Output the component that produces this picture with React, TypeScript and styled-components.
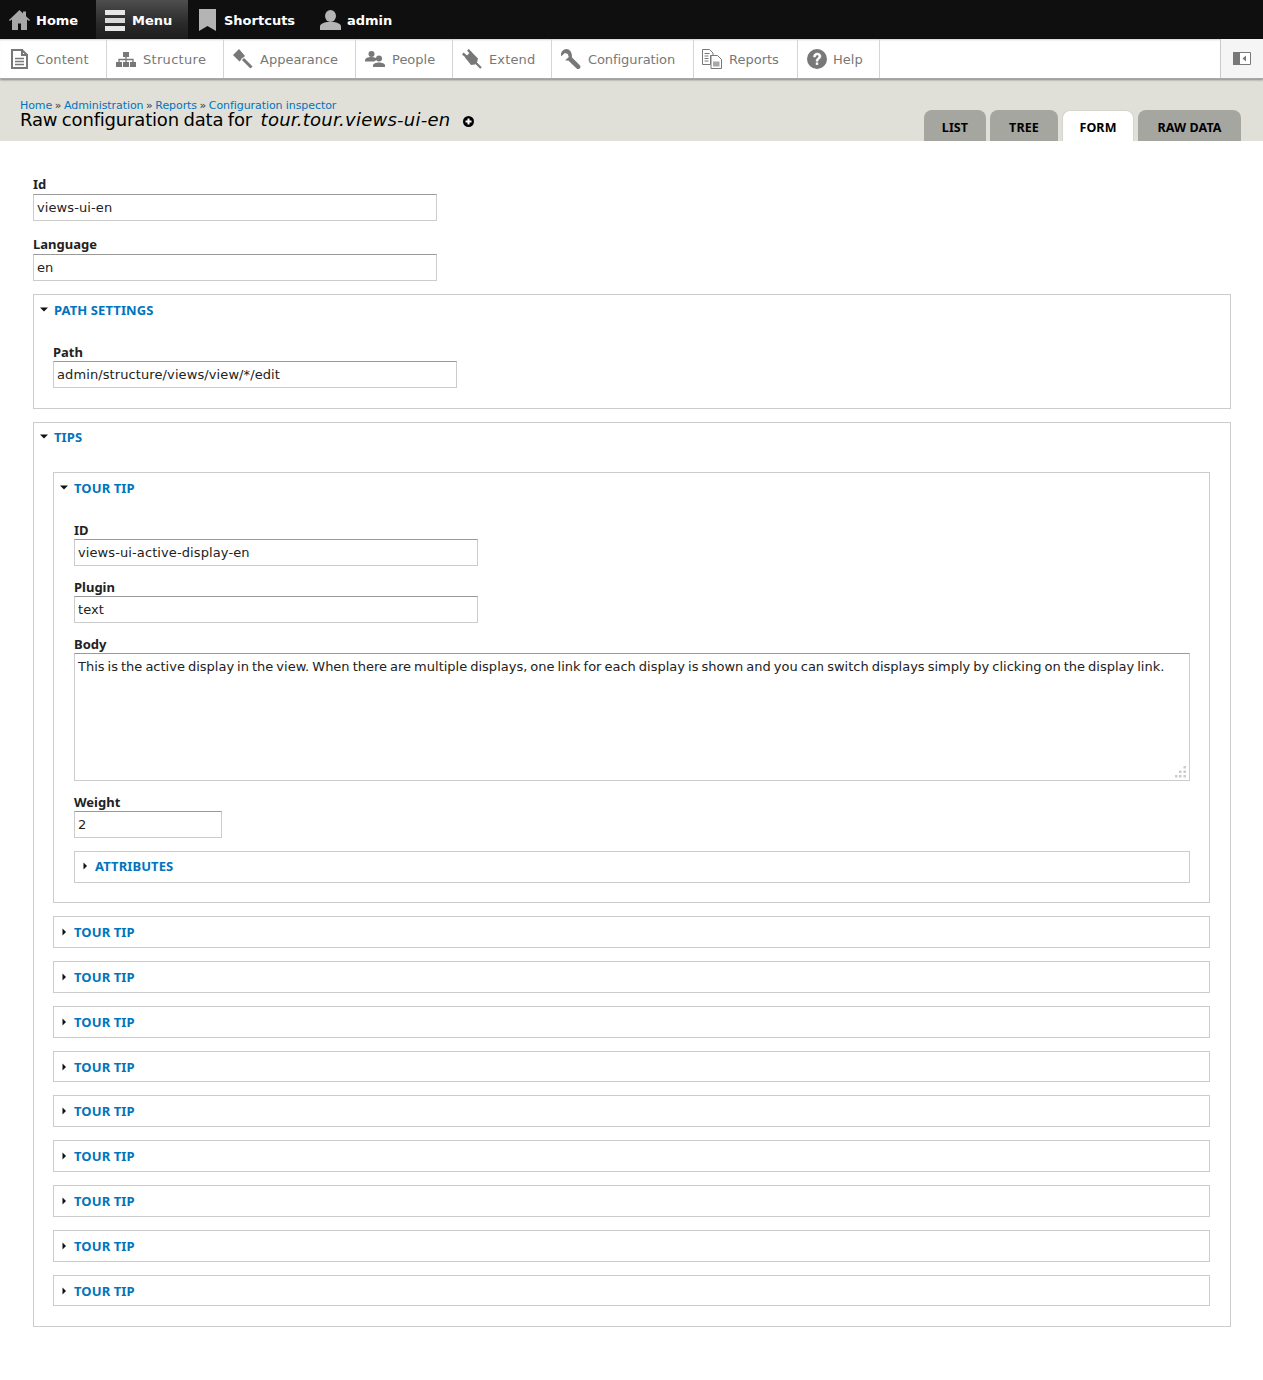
import React from "react";
import styled, { createGlobalStyle } from "styled-components";

const BODY_FONT = `"DejaVu Sans", Verdana, sans-serif`;
const LABEL_FONT = `"Noto Sans", "Open Sans", sans-serif`;

const Global = createGlobalStyle`
  html, body { margin: 0; padding: 0; background: #fff; }
  body { font-family: ${BODY_FONT}; font-size: 13px; color: #222; }
  * { box-sizing: border-box; }
`;

const Page = styled.div`
  width: 1263px;
  min-height: 1380px;
  background: #fff;
`;

const TopBar = styled.div`
  display: flex;
  height: 39px;
  background: #0f0f0f;
`;

const TopItem = styled.a<{ $active?: boolean; $width: number; $gap: number; $pad: number }>`
  display: flex;
  align-items: center;
  width: ${(p) => p.$width}px;
  height: 39px;
  padding: 1px 0 0 ${(p) => p.$pad}px;
  gap: ${(p) => p.$gap}px;
  color: #fff;
  font-weight: 700;
  font-size: 13px;
  background: ${(p) => (p.$active ? "linear-gradient(#4e4e4e, #2a2a2a 60%, #1d1d1d)" : "transparent")};
`;

const Tray = styled.div`
  position: relative;
  z-index: 1;
  display: flex;
  height: 40px;
  background: #fff;
  border-bottom: 1px solid #a8a8a8;
  box-shadow: 0 1px 2px rgba(0, 0, 0, 0.4), inset 0 2px 2px -1px rgba(0, 0, 0, 0.18);
`;

const TrayItem = styled.a<{ $width: number; $gap: number; $pad: number; $track?: number }>`
  display: flex;
  align-items: center;
  width: ${(p) => p.$width}px;
  height: 39px;
  padding: 1px 0 0 ${(p) => p.$pad}px;
  gap: ${(p) => p.$gap}px;
  border-right: 1px solid #d5d5d5;
  color: #787878;
  font-size: 13px;
  letter-spacing: ${(p) => p.$track ?? 0}px;
`;

const TraySpacer = styled.div`
  flex: 1;
`;

const TrayToggle = styled.div`
  display: flex;
  align-items: center;
  justify-content: center;
  width: 43px;
  height: 39px;
  background: #f5f5f5;
  border-left: 1px solid #c9c9c9;
`;

const Header = styled.header`
  position: relative;
  height: 62px;
  background: #e0e0d8;
  padding: 20px 20px 0;
`;

const Crumbs = styled.div`
  font-size: 11px;
  line-height: 13px;
  color: #333;
  letter-spacing: -0.08px;
  word-spacing: -0.8px;
  white-space: nowrap;
`;

const Crumb = styled.a`
  color: #0074bd;
  word-spacing: 0;
`;

const Title = styled.h1`
  display: flex;
  align-items: center;
  margin: 0;
  height: 15px;
  font-size: 18px;
  font-weight: 400;
  line-height: 15px;
  letter-spacing: -0.18px;
  word-spacing: -1px;
  color: #000;
  white-space: pre;
  em {
    margin-left: 4px;
    font-style: italic;
    letter-spacing: 0.25px;
  }
`;

const PlusIcon = styled.svg`
  margin-left: 13px;
  margin-top: 3px;
`;

const Tabs = styled.nav`
  position: absolute;
  right: 22px;
  bottom: 0;
  display: flex;
  gap: 4px;
`;

const Tab = styled.a<{ $active?: boolean; $width: number }>`
  display: flex;
  align-items: center;
  justify-content: center;
  width: ${(p) => p.$width}px;
  height: 31px;
  border-radius: 8px 8px 0 0;
  background: ${(p) => (p.$active ? "#fff" : "#a6a6a0")};
  border: ${(p) => (p.$active ? "1px solid #d5d5cd" : "none")};
  border-bottom: none;
  color: #000;
  font-family: ${LABEL_FONT};
  font-size: 12.5px;
  font-weight: 700;
  letter-spacing: 0.1px;
  padding-top: ${(p) => (p.$active ? 2 : 4)}px;
`;

const Content = styled.main`
  padding: 36px 32px 0 33px;
`;

const Item = styled.div<{ $gap?: number }>`
  margin-bottom: ${(p) => p.$gap ?? 13}px;
`;

const Label = styled.label<{ $raised?: boolean }>`
  display: block;
  height: 17px;
  font-family: ${LABEL_FONT};
  font-size: 13px;
  font-weight: 700;
  line-height: ${(p) => (p.$raised ? 15 : 17)}px;
  color: #222;
`;

const TextInput = styled.input<{ $width: number }>`
  display: block;
  width: ${(p) => p.$width}px;
  height: 27px;
  padding: 0 3px;
  border: 1px solid #ccc;
  border-top-color: #999;
  border-radius: 0;
  outline: none;
  font-family: ${BODY_FONT};
  font-size: 13px;
  letter-spacing: 0.1px;
  color: #222;
`;

const AreaWrap = styled.div`
  position: relative;
  width: 1116px;
`;

const TextArea = styled.textarea`
  display: block;
  width: 100%;
  height: 128px;
  padding: 4px 3px;
  border: 1px solid #ccc;
  border-top-color: #999;
  border-radius: 0;
  outline: none;
  resize: none;
  font-family: ${BODY_FONT};
  font-size: 13px;
  line-height: 18px;
  word-spacing: -1.1px;
  color: #222;
`;

const Grip = styled.svg`
  position: absolute;
  right: 3px;
  bottom: 3px;
`;

const Fieldset = styled.section<{ $open?: boolean; $level: number; $last?: boolean; $bottom?: number }>`
  margin-bottom: ${(p) => (p.$last ? 0 : 13)}px;
  border: 1px solid #ccc;
  padding: 0 ${(p) => (p.$level === 0 ? 20 : 19)}px ${(p) => (p.$open ? (p.$bottom ?? 20) : 0)}px
    ${(p) => (p.$level === 0 ? 19 : 20)}px;
  height: ${(p) => (p.$open ? "auto" : "31.8px")};
`;

const Legend = styled.h3<{ $open?: boolean; $level: number; $lift?: boolean }>`
  position: relative;
  display: flex;
  align-items: center;
  height: 30px;
  margin: 0 0 ${(p) => (p.$open ? 19 : 0)}px ${(p) => (p.$level === 0 ? 1 : 0)}px;
  padding-bottom: ${(p) => (p.$lift ? 2 : 0)}px;
  color: #0074bd;
  font-family: ${LABEL_FONT};
  font-size: 13px;
  font-weight: 700;
  letter-spacing: 0.1px;
  text-transform: uppercase;
`;

const Caret = styled.svg<{ $lift?: boolean }>`
  position: absolute;
  left: -15px;
  top: ${(p) => (p.$lift ? 10 : 11)}px;
`;

const TOUR_COUNT = 9;

const SectionTitle = ({ open, level, lift, children }: { open?: boolean; level: number; lift?: boolean; children: React.ReactNode }) => (
  <Legend $open={open} $level={level} $lift={lift}>
    <Caret $lift={lift} width="10" height="8" viewBox="0 0 10 8">
      {open ? <path d="M1 1.500h8L5 5.500z" fill="#111" /> : <path d="M3.500 0.500v7L7 4z" fill="#111" />}
    </Caret>
    {children}
  </Legend>
);

const G = "#787878";

const HomeIcon = () => (
  <svg width="21" height="20" viewBox="0 0 21 20">
    <path d="M10.500 0 0 10l.8 1L3 9.500V20h6v-6.500h3V20h6V9.500l2.200 1.500.8-1-4-3.800V1.500h-3v2z" fill="#a8a8a8" />
  </svg>
);
const MenuIcon = () => (
  <svg width="20" height="21" viewBox="0 0 20 21">
    <path d="M0 0h20v5H0z" fill="#e6e6e6" />
    <path d="M0 8h20v5H0z" fill="#d8d8d8" />
    <path d="M0 16h20v5H0z" fill="#e6e6e6" />
  </svg>
);
const BookmarkIcon = () => (
  <svg width="17" height="22" viewBox="0 0 17 22">
    <path d="M0 0h17v22l-8.500-5L0 22z" fill="#b4b4b4" />
  </svg>
);
const UserIcon = () => (
  <svg width="21" height="20" viewBox="0 0 21 20">
    <ellipse cx="10.500" cy="6" rx="5.500" ry="6" fill="#b4b4b4" />
    <path d="M0 20v-3.500C0 14 4 12.500 7 12h7c3 .5 7 2 7 4.500V20z" fill="#b4b4b4" />
  </svg>
);
const ContentIcon = () => (
  <svg width="17" height="20" viewBox="0 0 17 20">
    <path d="M1 1h10l5 5v13H1z" fill="#fff" stroke={G} strokeWidth="2" />
    <path d="M10 0h2v5h5v2h-7z" fill={G} />
    <path d="M4 9.500h9M4 12.500h9M4 15.500h9" stroke={G} strokeWidth="1.500" />
  </svg>
);
const StructureIcon = () => (
  <svg width="20" height="15" viewBox="0 0 20 15">
    <path d="M7 0h6v5H7zM0 10h6v5H0zM7 10h6v5H7zM14 10h6v5h-6z" fill={G} />
    <path d="M10 5v5M3 10V7.500h14V10" stroke={G} strokeWidth="1.300" fill="none" />
  </svg>
);
const AppearanceIcon = () => (
  <svg width="20" height="20" viewBox="0 0 20 20">
    <path d="M6 0 0 6l6.500 6.500L8 11l.5-1.500 1.500-.8L12 7z" fill={G} />
    <path d="M10 10l8.500 8.500" stroke={G} strokeWidth="3" />
  </svg>
);
const PeopleIcon = () => (
  <svg width="20" height="16" viewBox="0 0 20 16">
    <circle cx="6.500" cy="3" r="3" fill={G} />
    <path d="M0 9.500C0 7 3 6 6.500 6s5 1 6 2.500L9 10.500H0z" fill={G} />
    <circle cx="14" cy="7.500" r="3" fill={G} />
    <path d="M8 16v-1.500c0-2 3-3 6-3s6 1 6 3V16z" fill={G} />
  </svg>
);
const ExtendIcon = () => (
  <svg width="20" height="20" viewBox="0 0 20 20">
    <path d="M.8 4.500 5.500 8.500M6 .7l4 4.800" stroke={G} strokeWidth="2.400" />
    <path d="M3 8.500 9 2.500l7 7-1 4-2 2-4 .5z" fill={G} />
    <path d="M14 14l5 5" stroke={G} strokeWidth="2.200" />
  </svg>
);
const ConfigIcon = () => (
  <svg width="20" height="20" viewBox="0 0 20 20">
    <path d="M5.500 0C2.500.1 0 2.500 0 5.500c0 .7.100 1.300.3 1.800l3.500-3.400 3 1L7.800 8 4.300 11.300c1 .4 2 .5 3 .3L15.600 19.400c1 .9 2.400.8 3.300-.1.800-.9.800-2.200-.1-3.100L10.800 8.300C11.600 4 8.800.2 5.500 0z" fill={G} />
  </svg>
);
const ReportsIcon = () => (
  <svg width="20" height="20" viewBox="0 0 20 20">
    <path d="M.5.500h7l3.500 3.500v2.500H8.500v9H.5z" fill="#fff" stroke={G} />
    <path d="M2.500 4.500h5M2.500 7h4M2.500 9.500h4M2.500 12h4" stroke={G} />
    <path d="M9 6.500h6.500l4 4v9H9z" fill="#fff" stroke={G} />
    <path d="M11 12.500h6.500v5H11z" fill="#a8a8a8" />
  </svg>
);
const HelpIcon = () => (
  <svg width="20" height="20" viewBox="0 0 20 20">
    <circle cx="10" cy="10" r="10" fill={G} />
    <path d="M6.500 8C6.500 5.500 8 4 10.200 4 12.500 4 14 5.400 14 7.200c0 2.600-3 2.800-3 5H9c0-3 2.800-3.500 2.800-5 0-.8-.7-1.300-1.600-1.300-1 0-1.600.7-1.700 2.100z" fill="#fff" stroke="#fff" strokeWidth=".5" />
    <rect x="8.800" y="13.500" width="2.400" height="2.400" fill="#fff" />
  </svg>
);

export default function App() {
  return (
    <Page>
      <Global />
      <TopBar>
        <TopItem $width={96} $gap={6} $pad={9}><HomeIcon />Home</TopItem>
        <TopItem $width={92} $gap={7} $pad={9} $active><MenuIcon />Menu</TopItem>
        <TopItem $width={132} $gap={8} $pad={11}><BookmarkIcon />Shortcuts</TopItem>
        <TopItem $width={100} $gap={6} $pad={0}><UserIcon />admin</TopItem>
      </TopBar>
      <Tray>
        <TrayItem $width={107} $gap={8} $pad={11} $track={0.15}><ContentIcon />Content</TrayItem>
        <TrayItem $width={117} $gap={7} $pad={9} $track={0.3}><StructureIcon />Structure</TrayItem>
        <TrayItem $width={132} $gap={7} $pad={9}><AppearanceIcon />Appearance</TrayItem>
        <TrayItem $width={97} $gap={7} $pad={9}><PeopleIcon />People</TrayItem>
        <TrayItem $width={99} $gap={7} $pad={9} $track={0.15}><ExtendIcon />Extend</TrayItem>
        <TrayItem $width={142} $gap={7} $pad={9} $track={-0.08}><ConfigIcon />Configuration</TrayItem>
        <TrayItem $width={104} $gap={7} $pad={8}><ReportsIcon />Reports</TrayItem>
        <TrayItem $width={82} $gap={6} $pad={9}><HelpIcon />Help</TrayItem>
        <TraySpacer />
        <TrayToggle>
          <svg width="18" height="13" viewBox="0 0 18 13">
            <path d="M0 0h18v13H0z" fill="#fff" />
            <path d="M.5.5h17v12H.5z" fill="none" stroke="#787878" />
            <path d="M0 0h7v13H0z" fill="#787878" />
            <path d="M13 3.500v6L9.500 6.500z" fill="#787878" />
          </svg>
        </TrayToggle>
      </Tray>
      <Header>
        <Crumbs>
          <Crumb>Home</Crumb> » <Crumb>Administration</Crumb> » <Crumb>Reports</Crumb> » <Crumb>Configuration inspector</Crumb>
        </Crumbs>
        <Title>
          Raw configuration data for <em>tour.tour.views-ui-en</em>
          <PlusIcon width="11" height="11" viewBox="0 0 11 11">
            <circle cx="5.500" cy="5.500" r="5.500" fill="#000" />
            <path d="M2.500 5.500h6M5.500 2.500v6" stroke="#fff" strokeWidth="2" />
          </PlusIcon>
        </Title>
        <Tabs>
          <Tab $width={62}>LIST</Tab>
          <Tab $width={68}>TREE</Tab>
          <Tab $width={72} $active>FORM</Tab>
          <Tab $width={103}>RAW DATA</Tab>
        </Tabs>
      </Header>
      <Content>
        <Item $gap={16}>
          <Label $raised>Id</Label>
          <TextInput $width={404} value="views-ui-en" readOnly />
        </Item>
        <Item>
          <Label $raised>Language</Label>
          <TextInput $width={404} value="en" readOnly />
        </Item>
        <Fieldset $open $level={0}>
          <SectionTitle open level={0}>Path settings</SectionTitle>
          <Label>Path</Label>
          <TextInput $width={404} value="admin/structure/views/view/*/edit" readOnly />
        </Fieldset>
        <Fieldset $open $level={0} $bottom={19.5}>
          <SectionTitle open level={0} lift>Tips</SectionTitle>
          <Fieldset $open $level={1} $bottom={19.5}>
            <SectionTitle open level={1}>Tour tip</SectionTitle>
            <Item>
              <Label>ID</Label>
              <TextInput $width={404} value="views-ui-active-display-en" readOnly />
            </Item>
            <Item>
              <Label>Plugin</Label>
              <TextInput $width={404} value="text" readOnly />
            </Item>
            <Item>
              <Label>Body</Label>
              <AreaWrap>
                <TextArea
                  readOnly
                  value="This is the active display in the view. When there are multiple displays, one link for each display is shown and you can switch displays simply by clicking on the display link."
                />
                <Grip width="12" height="12" viewBox="0 0 12 12">
                  <path d="M8.500 0h2.500v2.500H8.500zM4 4.500h2.500V7H4zM8.500 4.500h2.500V7H8.500zM0 9h2.500v2.500H0zM4 9h2.500v2.500H4zM8.500 9h2.500v2.500H8.500z" fill="#ccc" />
                </Grip>
              </AreaWrap>
            </Item>
            <Item>
              <Label>Weight</Label>
              <TextInput $width={148} value="2" readOnly />
            </Item>
            <Fieldset $level={1} $last>
              <SectionTitle level={1} lift>Attributes</SectionTitle>
            </Fieldset>
          </Fieldset>
          {Array.from({ length: TOUR_COUNT }, (_, i) => (
            <Fieldset key={i} $level={1} $last={i === TOUR_COUNT - 1}>
              <SectionTitle level={1}>Tour tip</SectionTitle>
            </Fieldset>
          ))}
        </Fieldset>
      </Content>
    </Page>
  );
}
